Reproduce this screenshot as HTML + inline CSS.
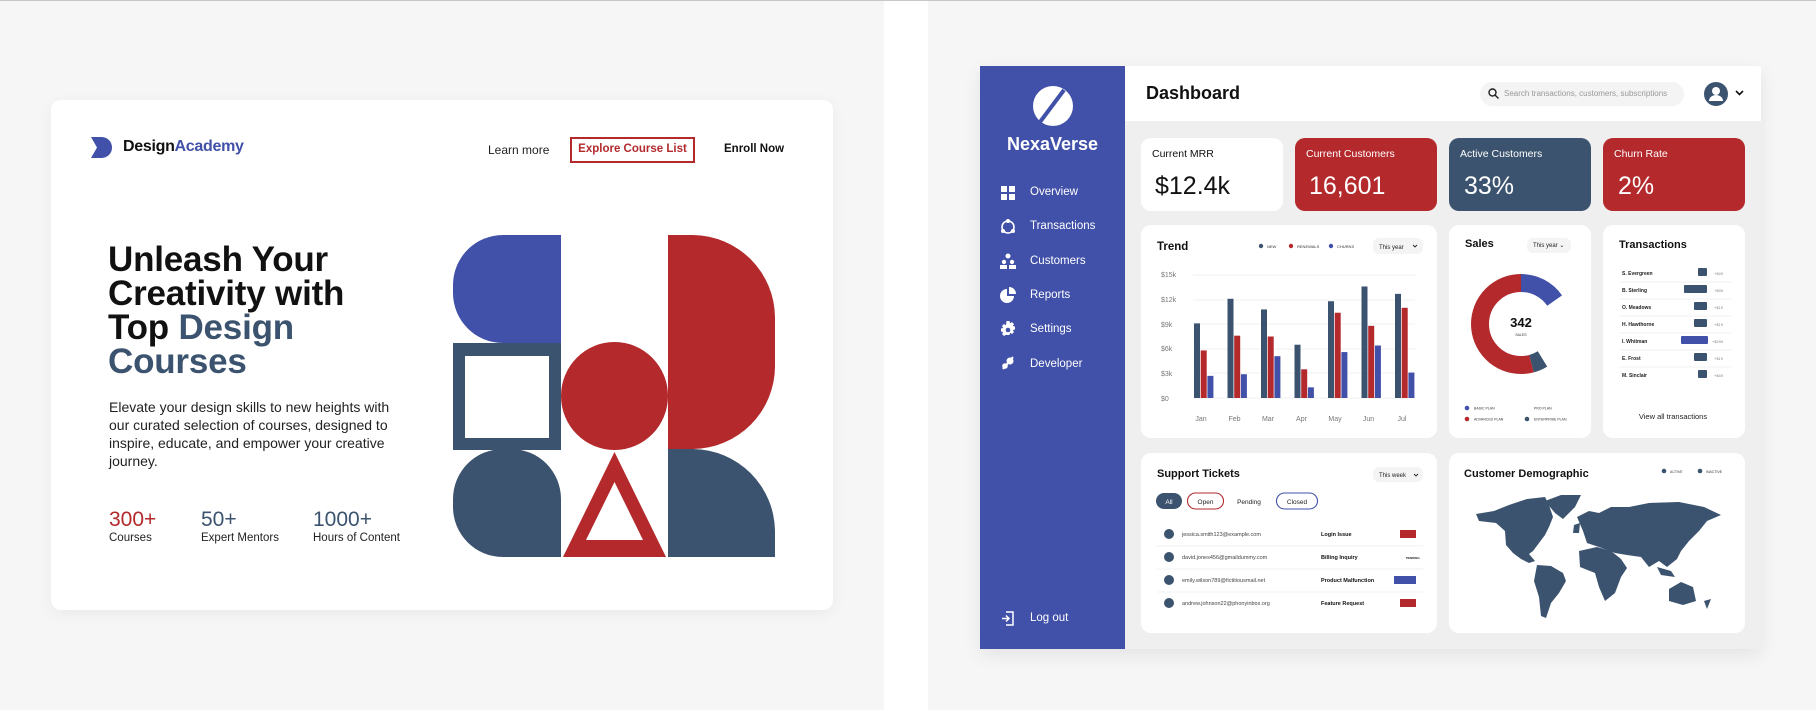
<!DOCTYPE html>
<html><head><meta charset="utf-8">
<style>
*{margin:0;padding:0;box-sizing:border-box}
body{width:1816px;height:710px;background:#fff;font-family:"Liberation Sans",sans-serif;position:relative;overflow:hidden;color:#111}
.a{position:absolute}
.card{position:absolute;background:#fff;border-radius:10px}
.t{position:absolute;white-space:nowrap}
</style></head><body>
<div class="a" style="left:0;top:0;width:1816px;height:1px;background:#c8c8c8"></div>
<div class="a" style="left:0;top:1px;width:884px;height:709px;background:#f6f6f6"></div>
<div class="a" style="left:928px;top:1px;width:888px;height:709px;background:#f6f6f6"></div>

<!-- LEFT CARD -->
<div class="card" style="left:51px;top:100px;width:782px;height:510px;box-shadow:0 4px 16px rgba(0,0,0,0.05)"></div>
<svg class="a" style="left:91px;top:137px" width="22" height="21" viewBox="0 0 22 21"><path d="M0 0 H10 C17 0 21 5 21 10.5 C21 16 17 21 10 21 H0 L6 10.5 Z" fill="#4150a8"/></svg>
<div class="t" style="left:123px;top:138px;font-size:16px;font-weight:bold;letter-spacing:-0.3px">Design<span style="color:#4150a8">Academy</span></div>
<div class="t" style="left:488px;top:143px;font-size:12px;color:#222">Learn more</div>
<div class="a" style="left:570px;top:137px;width:125px;height:26px;border:2px solid #b3292c"></div>
<div class="t" style="left:570px;top:143px;width:125px;text-align:center;font-size:11.5px;font-weight:bold;color:#b3292c">Explore Course List</div>
<div class="t" style="left:724px;top:143px;font-size:11.5px;font-weight:bold">Enroll Now</div>

<div class="t" style="left:108px;top:243px;font-size:35px;line-height:34px;font-weight:bold;letter-spacing:-0.2px">Unleash Your<br>Creativity with<br>Top <span style="color:#3b536e">Design</span><br><span style="color:#3b536e">Courses</span></div>
<div class="t" style="left:109px;top:398px;font-size:14px;line-height:18px;color:#222">Elevate your design skills to new heights with<br>our curated selection of courses, designed to<br>inspire, educate, and empower your creative<br>journey.</div>
<div class="t" style="left:109px;top:508px;font-size:21px;color:#b3292c">300+</div>
<div class="t" style="left:109px;top:532px;font-size:11.5px;color:#222">Courses</div>
<div class="t" style="left:201px;top:508px;font-size:21px;color:#3b536e">50+</div>
<div class="t" style="left:201px;top:532px;font-size:11.5px;color:#222">Expert Mentors</div>
<div class="t" style="left:313px;top:508px;font-size:21px;color:#3b536e">1000+</div>
<div class="t" style="left:313px;top:532px;font-size:11.5px;color:#222">Hours of Content</div>

<svg class="a" style="left:453px;top:235px" width="323" height="322" viewBox="0 0 323 322">
<path d="M108 0 V108 H50 A50 50 0 0 1 0 58 V50 A50 50 0 0 1 50 0 Z" fill="#4150a8"/>
<path d="M215 0 H240 A83 83 0 0 1 322 82 V132 A83 83 0 0 1 240 214 H215 Z" fill="#b3292c"/>
<rect x="0" y="108" width="108" height="107" fill="#3b536e"/>
<rect x="12" y="121" width="84" height="82" fill="#fff"/>
<ellipse cx="161.5" cy="161" rx="53.5" ry="54" fill="#b3292c"/>
<path d="M0 264 A50 50 0 0 1 50 214 H58 A50 50 0 0 1 108 264 V322 H50 A50 50 0 0 1 0 272 Z" fill="#3b536e"/>
<path d="M161.5 217 L213 322 H110 Z" fill="#b3292c"/>
<path d="M161.5 247 L190 305 H133 Z" fill="#fff"/>
<path d="M215 214 H240 A83 83 0 0 1 322 296 V322 H215 Z" fill="#3b536e"/>
</svg>

<!-- DASHBOARD -->
<div class="a" style="left:980px;top:66px;width:781px;height:583px;background:#efefef;box-shadow:0 6px 18px rgba(0,0,0,0.08)"></div>
<div class="a" style="left:980px;top:66px;width:145px;height:583px;background:#4150a8"></div>
<div class="a" style="left:1125px;top:66px;width:636px;height:55px;background:#fff"></div>
<svg class="a" style="left:1033px;top:86px" width="40" height="40" viewBox="0 0 40 40"><circle cx="20" cy="20" r="20" fill="#fff"/><path d="M31 4 L7 36" stroke="#4150a8" stroke-width="4"/></svg>
<div class="t" style="left:980px;top:134px;width:145px;text-align:center;font-size:18px;font-weight:bold;color:#fff">NexaVerse</div>
<div class="a" style="left:1001px;top:186px;width:14px;height:14px">
<svg width="14" height="14"><rect x="0" y="0" width="6" height="6" fill="#fff"/><rect x="8" y="0" width="6" height="6" fill="#fff"/><rect x="0" y="8" width="6" height="6" fill="#fff"/><rect x="8" y="8" width="6" height="6" fill="#fff"/></svg></div>
<svg class="a" style="left:1000px;top:219px" width="16" height="16"><circle cx="8" cy="8" r="6" fill="none" stroke="#fff" stroke-width="1.6"/><circle cx="8" cy="2" r="2" fill="#fff"/><circle cx="3" cy="12" r="2" fill="#fff"/><circle cx="13" cy="12" r="2" fill="#fff"/></svg>
<svg class="a" style="left:1000px;top:253px" width="16" height="16"><circle cx="8" cy="3" r="2.5" fill="#fff"/><circle cx="4" cy="9" r="2.2" fill="#fff"/><circle cx="12" cy="9" r="2.2" fill="#fff"/><rect x="0" y="12" width="7" height="4" fill="#fff"/><rect x="9" y="12" width="7" height="4" fill="#fff"/></svg>
<svg class="a" style="left:1000px;top:287px" width="16" height="16"><path d="M7 2 A7 7 0 1 0 14 9 H7 Z" fill="#fff"/><path d="M9 0 A7 7 0 0 1 16 7 H9 Z" fill="#fff"/></svg>
<svg class="a" style="left:1000px;top:321px" width="16" height="16" viewBox="0 0 16 16"><path d="M6.5 0h3l.5 2.3 2-1.2 2 2-1.2 2 2.2.4v3l-2.2.5 1.2 2-2 2-2-1.2-.5 2.2h-3L6 13.8l-2 1.2-2-2 1.2-2L1 10.5v-3L3.2 7 2 5l2-2 2 1.2z" fill="#fff"/><circle cx="8" cy="9" r="2.3" fill="#4150a8"/></svg>
<svg class="a" style="left:1000px;top:355px" width="16" height="16"><path d="M3 14 L13 2" stroke="#fff" stroke-width="2"/><circle cx="10" cy="6" r="3.5" fill="#fff"/><circle cx="5" cy="11" r="2.8" fill="#fff"/></svg>
<div class="t" style="left:1030px;top:186px;font-size:11.5px;color:#fff">Overview</div>
<div class="t" style="left:1030px;top:220px;font-size:11.5px;color:#fff">Transactions</div>
<div class="t" style="left:1030px;top:255px;font-size:11.5px;color:#fff">Customers</div>
<div class="t" style="left:1030px;top:289px;font-size:11.5px;color:#fff">Reports</div>
<div class="t" style="left:1030px;top:323px;font-size:11.5px;color:#fff">Settings</div>
<div class="t" style="left:1030px;top:358px;font-size:11.5px;color:#fff">Developer</div>
<svg class="a" style="left:1001px;top:611px" width="14" height="15"><path d="M5 1 H12 V14 H5" fill="none" stroke="#fff" stroke-width="1.5"/><path d="M1 7.5 H8 M5 4.5 L8 7.5 L5 10.5" fill="none" stroke="#fff" stroke-width="1.5"/></svg>
<div class="t" style="left:1030px;top:612px;font-size:11.5px;color:#fff">Log out</div>

<div class="t" style="left:1146px;top:83px;font-size:18px;font-weight:bold">Dashboard</div>
<div class="a" style="left:1480px;top:82px;width:204px;height:24px;border-radius:12px;background:#f4f4f4"></div>
<svg class="a" style="left:1488px;top:88px" width="11" height="11"><circle cx="4.5" cy="4.5" r="3.5" fill="none" stroke="#222" stroke-width="1.4"/><path d="M7 7 L10.5 10.5" stroke="#222" stroke-width="1.4"/></svg>
<div class="t" style="left:1504px;top:89px;font-size:8px;color:#999">Search transactions, customers, subscriptions</div>
<svg class="a" style="left:1704px;top:82px" width="24" height="24"><circle cx="12" cy="12" r="12" fill="#3b536e"/><circle cx="12" cy="9" r="4" fill="#fff"/><path d="M5 19 A7 6 0 0 1 19 19 Z" fill="#fff"/></svg>
<svg class="a" style="left:1735px;top:90px" width="9" height="6"><path d="M1 1 L4.5 4.5 L8 1" fill="none" stroke="#111" stroke-width="1.6"/></svg>

<!-- stat cards -->
<div class="card" style="left:1141px;top:138px;width:142px;height:73px"></div>
<div class="t" style="left:1152px;top:148px;font-size:10.5px">Current MRR</div>
<div class="t" style="left:1155px;top:172px;font-size:25px">$12.4k</div>
<div class="card" style="left:1295px;top:138px;width:142px;height:73px;background:#b3292c"></div>
<div class="t" style="left:1306px;top:148px;font-size:10.5px;color:#fff">Current Customers</div>
<div class="t" style="left:1309px;top:172px;font-size:25px;color:#fff">16,601</div>
<div class="card" style="left:1449px;top:138px;width:142px;height:73px;background:#3b536e"></div>
<div class="t" style="left:1460px;top:148px;font-size:10.5px;color:#fff">Active Customers</div>
<div class="t" style="left:1464px;top:172px;font-size:25px;color:#fff">33%</div>
<div class="card" style="left:1603px;top:138px;width:142px;height:73px;background:#b3292c"></div>
<div class="t" style="left:1614px;top:148px;font-size:10.5px;color:#fff">Churn Rate</div>
<div class="t" style="left:1618px;top:172px;font-size:25px;color:#fff">2%</div>

<!-- Trend -->
<div class="card" style="left:1141px;top:225px;width:296px;height:213px"></div>
<svg class="a" style="left:1141px;top:225px" width="296" height="213" viewBox="0 0 296 213" font-family="Liberation Sans,sans-serif">
<text x="16" y="25" font-size="11.5" font-weight="bold" fill="#111">Trend</text>
<circle cx="120" cy="21" r="2.2" fill="#3b536e"/><text x="126" y="23" font-size="4" fill="#333">NEW</text>
<circle cx="150" cy="21" r="2.2" fill="#b3292c"/><text x="156" y="23" font-size="4" fill="#333">RENEWALS</text>
<circle cx="190" cy="21" r="2.2" fill="#4150a8"/><text x="196" y="23" font-size="4" fill="#333">CHURNS</text>
<rect x="232" y="13" width="50" height="16" rx="6" fill="#f4f4f4"/><text x="238" y="24" font-size="6" fill="#222">This year</text><path d="M272 20 L274 22 L276 20" stroke="#222" fill="none" stroke-width="0.9"/>
<g font-size="7" fill="#777">
<text x="20" y="52">$15k</text><text x="20" y="77">$12k</text><text x="20" y="102">$9k</text><text x="20" y="126">$6k</text><text x="20" y="151">$3k</text><text x="20" y="176">$0</text></g>
<g stroke="#eee" stroke-width="0.8"><line x1="52" y1="50" x2="274" y2="50"/><line x1="52" y1="75" x2="274" y2="75"/><line x1="52" y1="99" x2="274" y2="99"/><line x1="52" y1="124" x2="274" y2="124"/><line x1="52" y1="148" x2="274" y2="148"/><line x1="52" y1="173" x2="274" y2="173"/></g>
<g id="bars"></g>
<g font-size="7" fill="#777" text-anchor="middle">
<text x="60" y="196">Jan</text><text x="93.5" y="196">Feb</text><text x="127" y="196">Mar</text><text x="160.5" y="196">Apr</text><text x="194" y="196">May</text><text x="227.5" y="196">Jun</text><text x="261" y="196">Jul</text></g>
</svg>

<!-- Sales -->
<div class="card" style="left:1449px;top:225px;width:142px;height:213px"></div>
<div class="t" style="left:1465px;top:238px;font-size:11px;font-weight:bold">Sales</div>
<div class="a" style="left:1527px;top:238px;width:44px;height:15px;border-radius:6px;background:#f4f4f4"></div>
<div class="t" style="left:1533px;top:242px;font-size:6px;color:#222">This year ⌄</div>
<svg class="a" style="left:1449px;top:225px" width="142" height="213" viewBox="0 0 142 213" font-family="Liberation Sans,sans-serif">
<g transform="rotate(-90 72 99)">
<circle cx="72" cy="99" r="41" fill="none" stroke="#4150a8" stroke-width="18" stroke-dasharray="39.4 300"/>
<circle cx="72" cy="99" r="41" fill="none" stroke="#3b536e" stroke-width="18" stroke-dasharray="0 106 12 300"/>
<circle cx="72" cy="99" r="41" fill="none" stroke="#b3292c" stroke-width="18" stroke-dasharray="0 118 140 300"/>
</g>
<text x="72" y="102" font-size="13" font-weight="bold" text-anchor="middle" fill="#111">342</text>
<text x="72" y="111" font-size="3.5" text-anchor="middle" fill="#333">SALES</text>
<g font-size="3.5" fill="#333">
<circle cx="18" cy="183" r="2.3" fill="#4150a8"/><text x="25" y="184.5">BASIC PLAN</text>
<text x="85" y="184.5">PRO PLAN</text>
<circle cx="18" cy="194" r="2.3" fill="#b3292c"/><text x="25" y="195.5">ADVANCED PLAN</text>
<circle cx="78" cy="194" r="2.3" fill="#3b536e"/><text x="85" y="195.5">ENTERPRISE PLAN</text></g>
</svg>

<!-- Transactions -->
<div class="card" style="left:1603px;top:225px;width:142px;height:213px"></div>
<svg class="a" style="left:1603px;top:225px" width="142" height="213" viewBox="0 0 142 213" font-family="Liberation Sans,sans-serif">
<text x="16" y="23" font-size="11" font-weight="bold" fill="#111">Transactions</text>
<g font-size="5" fill="#222" font-weight="bold">
<text x="19" y="50">S. Evergreen</text><text x="19" y="67">B. Sterling</text><text x="19" y="84">O. Meadows</text><text x="19" y="101">H. Hawthorne</text><text x="19" y="118">I. Whitman</text><text x="19" y="135">E. Frost</text><text x="19" y="152">M. Sinclair</text></g>
<g fill="#3b536e"><rect x="95" y="43" width="9" height="8" rx="1"/><rect x="81" y="60" width="23" height="8" rx="1"/><rect x="91" y="77" width="13" height="8" rx="1"/><rect x="91" y="94" width="13" height="8" rx="1"/><rect x="78" y="111" width="27" height="8" rx="1" fill="#4150a8"/><rect x="91" y="128" width="13" height="8" rx="1"/><rect x="95" y="145" width="9" height="8" rx="1"/></g>
<g font-size="4" fill="#888"><text x="111" y="50">+$49</text><text x="111" y="67">+$99</text><text x="111" y="84">+$19</text><text x="111" y="101">+$19</text><text x="109" y="118">+$299</text><text x="111" y="135">+$19</text><text x="111" y="152">+$49</text></g>
<g stroke="#eee" stroke-width="0.7"><line x1="16" y1="57" x2="128" y2="57"/><line x1="16" y1="74" x2="128" y2="74"/><line x1="16" y1="91" x2="128" y2="91"/><line x1="16" y1="108" x2="128" y2="108"/><line x1="16" y1="125" x2="128" y2="125"/><line x1="16" y1="142" x2="128" y2="142"/></g>
<text x="70" y="194" font-size="7.5" text-anchor="middle" fill="#222">View all transactions</text>
</svg>

<!-- Support tickets -->
<div class="card" style="left:1141px;top:453px;width:296px;height:180px"></div>
<svg class="a" style="left:1141px;top:450px" width="296" height="190" viewBox="0 0 296 190" font-family="Liberation Sans,sans-serif">
<text x="16" y="27" font-size="11" font-weight="bold" fill="#111">Support Tickets</text>
<rect x="232" y="17" width="50" height="15" rx="6" fill="#f4f4f4"/><text x="238" y="27" font-size="6" fill="#222">This week</text><path d="M273 24 L275 26 L277 24" stroke="#222" fill="none" stroke-width="0.9"/>
<rect x="15" y="43" width="26" height="16" rx="8" fill="#3b536e"/><text x="28" y="54" font-size="6.5" text-anchor="middle" fill="#fff">All</text>
<rect x="46.5" y="43" width="36" height="16" rx="8" fill="none" stroke="#b3292c" stroke-width="1.1"/><text x="64.5" y="54" font-size="6.5" text-anchor="middle" fill="#222">Open</text>
<text x="108" y="54" font-size="6.5" text-anchor="middle" fill="#222">Pending</text>
<rect x="135.5" y="43" width="41" height="16" rx="8" fill="none" stroke="#4150a8" stroke-width="1.1"/><text x="156" y="54" font-size="6.5" text-anchor="middle" fill="#222">Closed</text>
<g fill="#3b536e"><circle cx="28" cy="84" r="5"/><circle cx="28" cy="107" r="5"/><circle cx="28" cy="130" r="5"/><circle cx="28" cy="153" r="5"/></g>
<g font-size="5.5" fill="#444"><text x="41" y="86">jessica.smith123@example.com</text><text x="41" y="109">david.jones456@gmaildummy.com</text><text x="41" y="132">emily.wilson789@fictitiousmail.net</text><text x="41" y="155">andrew.johnson22@phonyinbox.org</text></g>
<g font-size="5.5" fill="#111" font-weight="bold"><text x="180" y="86">Login Issue</text><text x="180" y="109">Billing Inquiry</text><text x="180" y="132">Product Malfunction</text><text x="180" y="155">Feature Request</text></g>
<rect x="259" y="80" width="16" height="8" fill="#b3292c"/><text x="265" y="109" font-size="3" font-weight="bold" fill="#222">PENDING</text>
<rect x="253" y="126" width="22" height="8" fill="#4150a8"/><rect x="259" y="149" width="16" height="8" fill="#b3292c"/>
<g stroke="#eee" stroke-width="0.7"><line x1="16" y1="96" x2="282" y2="96"/><line x1="16" y1="119" x2="282" y2="119"/><line x1="16" y1="142" x2="282" y2="142"/></g>
</svg>

<!-- Demographic -->
<div class="card" style="left:1449px;top:453px;width:296px;height:180px"></div>
<svg class="a" style="left:1449px;top:455px" width="300" height="180" viewBox="0 0 300 180" font-family="Liberation Sans,sans-serif">
<text x="15" y="22" font-size="11" font-weight="bold" fill="#111">Customer Demographic</text>
<circle cx="215" cy="16" r="2.3" fill="#3b536e"/><text x="221" y="18" font-size="3.5" fill="#333">ACTIVE</text>
<circle cx="251" cy="16" r="2.3" fill="#3b536e"/><text x="257" y="18" font-size="3.5" fill="#333">INACTIVE</text>
<g fill="#3b536e">
<path d="M27 59 L45 56 L60 50 L78 44 L96 42 L100 50 L104 62 L100 72 L96 80 L90 88 L84 96 L80 99 L86 106 L80 108 L72 104 L64 98 L57 90 L56 76 L47 68 L30 66 Z"/>
<path d="M96 46 L112 40 L132 40 L126 52 L114 64 L106 58 Z"/>
<path d="M88 110 L102 111 L114 118 L117 126 L110 138 L102 148 L97 163 L92 161 L90 142 L85 126 Z"/>
<path d="M128 62 L140 56 L150 58 L162 52 L180 52 L200 48 L230 47 L255 52 L272 60 L258 66 L250 76 L240 86 L232 96 L228 104 L218 112 L210 106 L200 112 L192 102 L178 100 L166 98 L150 92 L138 88 L134 76 Z"/>
<path d="M130 96 L148 92 L162 96 L172 104 L178 113 L172 122 L166 138 L156 146 L150 132 L146 118 L131 112 Z"/>
<path d="M220 134 L232 127 L244 132 L247 146 L234 150 L220 146 Z"/>
<path d="M125 70 L131 68 L130 78 L124 78 Z"/>
<path d="M255 146 L262 144 L258 154 Z"/>
<path d="M208 112 L222 116 L226 122 L212 120 Z"/>
</g>
</svg>

<script>
var d=[[9.1,5.8,2.7],[12.1,7.6,2.9],[10.8,7.5,5.1],[6.5,3.5,1.3],[11.8,10.4,5.6],[13.6,8.8,6.4],[12.7,11,3.1]];
var c=["#3b536e","#b3292c","#4150a8"],s="";
for(var i=0;i<7;i++)for(var j=0;j<3;j++){var h=d[i][j]/15*123;s+='<rect x="'+(53+i*33.5+j*6.7)+'" y="'+(173-h)+'" width="6" height="'+h+'" fill="'+c[j]+'"/>';}
document.getElementById("bars").innerHTML=s;
</script>
</body></html>
